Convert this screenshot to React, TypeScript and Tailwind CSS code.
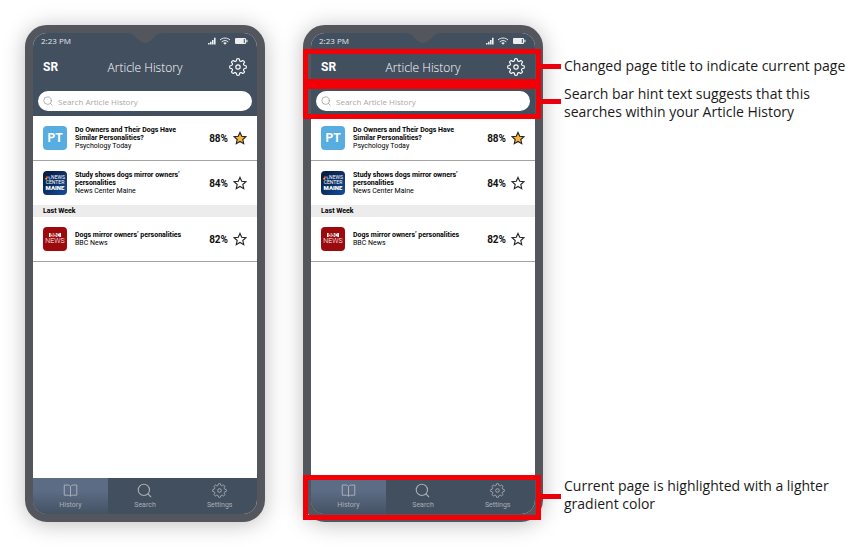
import React from "react";

const UI = "font-['Open_Sans','Noto_Sans',sans-serif]";
const ROBOTO = "font-[Roboto,'Liberation_Sans',sans-serif]";

const GEAR_PATH = (() => {
  const at = (deg: number, r: number) => {
    const a = ((deg - 90) * Math.PI) / 180;
    return `${(12 + r * Math.cos(a)).toFixed(2)} ${(12 + r * Math.sin(a)).toFixed(2)}`;
  };
  let d = `M${at(-9, 10.8)}`;
  for (let i = 0; i < 8; i++) {
    const c = i * 45;
    d += `Q${at(c, 11.5)} ${at(c + 9, 10.8)}L${at(c + 13, 9)}Q${at(c + 22.5, 7.4)} ${at(c + 32, 9)}L${at(c + 36, 10.8)}`;
  }
  return d + "Z";
})();

function GearIcon({ className }: { className: string }) {
  return (
    <svg viewBox="0 0 24 24" className={className} fill="none" stroke="currentColor" strokeWidth="1.5" strokeLinejoin="round" aria-hidden="true">
      <path d={GEAR_PATH} />
      <circle cx="12" cy="12" r="2.9" />
    </svg>
  );
}

function BookIcon({ className }: { className: string }) {
  return (
    <svg viewBox="0 0 24 24" className={className} fill="none" stroke="currentColor" strokeWidth="1.6" strokeLinejoin="round" aria-hidden="true">
      <path d="M12 5.5C10.8 4 9.5 3.2 7.5 3.2H2v16.3h6.5c1.8 0 2.8.7 3.5 1.6.7-.9 1.7-1.6 3.5-1.6H22V3.2h-5.5c-2 0-3.3.8-4.5 2.3ZM12 5.5v15.5" />
    </svg>
  );
}

function SearchIcon({ className }: { className: string }) {
  return (
    <svg viewBox="0 0 24 24" className={className} fill="none" stroke="currentColor" strokeWidth="1.8" strokeLinecap="round" aria-hidden="true">
      <circle cx="11" cy="11" r="9" />
      <path d="M17.5 17.5 22 22" />
    </svg>
  );
}

function StarIcon({ filled }: { filled: boolean }) {
  return (
    <svg viewBox="0 0 24 24" className="size-[14px]" fill={filled ? "#fdb338" : "#ffffff"} stroke="#222222" strokeWidth="1.9" strokeLinejoin="miter" aria-hidden="true">
      <path d="M12 2.4 15 9l7.2.8-5.4 4.8 1.6 7.1L12 18l-6.4 3.7 1.6-7.1L1.8 9.800 9 9Z" />
    </svg>
  );
}

function StatusIcons() {
  return (
    <svg viewBox="0 0 40 8" className="h-2 w-10" fill="#eceef0" aria-hidden="true">
      <path d="M0 6h1.6v1.500H0zM2 4.800h1.600v2.700H2zM4 3h1.600v4.500H4zM6 .8h1.600v6.700H6z" />
      <g fill="none" stroke="#eceef0" strokeWidth="1">
        <path d="M12 3c2.700-2.600 7.300-2.600 10 0M13.700 4.800c1.900-1.600 4.700-1.600 6.600 0" />
      </g>
      <path d="M15.200 6c1.100-.9 2.500-.9 3.600 0L17 7.800Z" />
      <rect x="27" y="1" width="11" height="6" rx="1" />
      <path d="M38.300 2.800h1.200v2.400h-1.200z" />
      <path d="M35.800 2h1v4h-1z" fill="#424f5f" />
    </svg>
  );
}

function PsychologyTodayLogo() {
  return <span className="flex size-6 items-center justify-center rounded bg-[#57ade0] text-[12px] font-bold text-white">PT</span>;
}

function NewsCenterMaineLogo() {
  return (
    <span className="flex size-6 flex-col items-center justify-center overflow-hidden rounded bg-linear-to-br from-[#071a3a] via-[#0d2f66] to-[#1450a0] text-white">
      <span className="flex items-center text-[5px] leading-[5px]">
        <svg viewBox="0 0 12 8" className="h-1 w-[6px]" aria-hidden="true">
          <circle cx="2.5" cy="5.5" r="2.2" fill="#f6b221" />
          <circle cx="4" cy="2.5" r="2.2" fill="#ee5a2a" />
          <circle cx="8" cy="2.5" r="2.2" fill="#8a5fc0" />
          <circle cx="9.5" cy="5.5" r="2.2" fill="#35a7e0" />
        </svg>
        NEWS
      </span>
      <span className="text-[5px] leading-[5px]">CENTER</span>
      <span className="text-[6px] leading-[6px] font-black">MAINE</span>
    </span>
  );
}

function BbcNewsLogo() {
  return (
    <span className="flex size-6 flex-col items-center justify-center rounded bg-[#9d0a0e] text-white">
      <span className="flex bg-white px-px text-[5px] leading-[4px] font-bold text-[#9d0a0e]">BBC</span>
      <span className="text-[7px] leading-[8px] font-light">NEWS</span>
    </span>
  );
}

type Article = { title: string; source: string; score: string; starred: boolean; logo: React.ReactNode };

function ArticleRow({ article, divided }: { article: Article; divided: boolean }) {
  return (
    <li className={`flex items-center px-[10px] ${divided ? "h-[45px] border-b border-[#a3a3a3]" : "h-11"}`}>
      {article.logo}
      <div className="ml-2 min-w-0 flex-1 text-[7px] leading-[8px] text-black">
        <h3 className="max-w-[112px] font-bold">{article.title}</h3>
        <p>{article.source}</p>
      </div>
      <span className="mr-[5px] text-[10px] font-bold text-[#111111]">{article.score}</span>
      <button type="button" aria-label="Save article" className="flex">
        <StarIcon filled={article.starred} />
      </button>
    </li>
  );
}

const thisWeek: Article[] = [
  { title: "Do Owners and Their Dogs Have Similar Personalities?", source: "Psychology Today", score: "88%", starred: true, logo: <PsychologyTodayLogo /> },
  { title: "Study shows dogs mirror owners’ personalities", source: "News Center Maine", score: "84%", starred: false, logo: <NewsCenterMaineLogo /> },
];

const lastWeek: Article[] = [
  { title: "Dogs mirror owners’ personalities", source: "BBC News", score: "82%", starred: false, logo: <BbcNewsLogo /> },
];

const tabs = [
  { label: "History", Icon: BookIcon },
  { label: "Search", Icon: SearchIcon },
  { label: "Settings", Icon: GearIcon },
];

function Highlight({ className, line }: { className: string; line: string }) {
  return (
    <div className={`pointer-events-none absolute -left-2 -right-[6px] border-[5px] border-[#f20008] ${className}`}>
      <span className={`absolute left-full ml-[5px] h-[5px] w-5 bg-[#e8000a] ${line}`} />
    </div>
  );
}

function Phone({ annotated = false }: { annotated?: boolean }) {
  return (
    <section className="relative flex h-[497px] w-60 shrink-0 flex-col rounded-[22px] border-8 border-[#53575d] bg-white shadow-[0_2px_22px_rgba(0,0,0,0.26)]">
      <header className="relative rounded-t-[14px] bg-[#424f5f] text-white">
        <svg viewBox="0 0 34 11" className="absolute top-0 left-1/2 h-[11px] w-[34px] -translate-x-1/2" fill="#53575d" aria-hidden="true">
          <path d="M0 0h34c-3 0-4.5 1-6.5 3l-5 4.500c-3.500 3.300-7.500 3.300-11 0l-5-4.500C4.500 1 3 0 0 0Z" />
        </svg>
        <div className={`flex h-4 items-center justify-between pr-[9px] pl-2 text-[8px] text-[#e4e7ea] ${UI}`}>
          <span>2:23 PM</span>
          <StatusIcons />
        </div>
        <div className="grid h-[35px] grid-cols-[1fr_auto_1fr] items-center px-[10px]">
          <span className={`text-[12px] font-bold ${ROBOTO}`}>SR</span>
          <h1 className={`pt-[2px] text-[12px] font-light ${UI}`}>Article History</h1>
          <button type="button" aria-label="Settings" className="flex justify-self-end">
            <GearIcon className="size-[18px]" />
          </button>
        </div>
        <div className="px-[5px] pt-[7px] pb-[5px]">
          <label className="flex h-5 items-center gap-[5px] rounded-full bg-white px-[5px] text-[#9a9a9a]">
            <SearchIcon className="size-[10px] shrink-0" />
            <input
              type="search"
              aria-label="Search Article History"
              placeholder="Search Article History"
              className={`h-full min-w-0 flex-1 bg-transparent text-[8px] text-black outline-none placeholder:text-[#a8a8a8] ${UI}`}
            />
          </label>
        </div>
      </header>

      <main className={`flex-1 ${ROBOTO}`}>
        <ul>
          {thisWeek.map((a, i) => (
            <ArticleRow key={a.title} article={a} divided={i === 0} />
          ))}
        </ul>
        <h2 className="bg-[#ececec] px-[10px] text-[7px] leading-[12px] font-bold text-black">Last Week</h2>
        <ul>
          {lastWeek.map((a) => (
            <ArticleRow key={a.title} article={a} divided />
          ))}
        </ul>
      </main>

      <nav className={`grid h-9 grid-cols-3 overflow-hidden rounded-b-[14px] bg-[#424f5f] text-[7px] leading-[8px] text-[#a9aeb5] ${ROBOTO}`}>
        {tabs.map(({ label, Icon }, i) => (
          <button
            key={label}
            type="button"
            className={`flex flex-col items-center gap-[3px] pt-[5px] ${i === 0 ? "bg-linear-to-b from-[#5c6c85] from-35% to-[#445263]" : ""}`}
          >
            <Icon className="size-[15px]" />
            <span>{label}</span>
          </button>
        ))}
      </nav>

      {annotated && (
        <>
          <Highlight className="top-4 h-[35px]" line="top-[10px]" />
          <Highlight className="top-[51px] h-[35px]" line="top-[10px]" />
          <Highlight className="-bottom-[6px] h-[45px]" line="top-[14px]" />
        </>
      )}
    </section>
  );
}

export default function App() {
  return (
    <div className="flex min-h-screen items-start overflow-hidden bg-white py-[25px] pl-[25px]">
      <Phone />
      <div className="ml-[38px] flex flex-1 items-stretch">
        <Phone annotated />
        <aside className={`ml-[21px] flex flex-1 flex-col pt-8 pb-[9px] text-[14px] leading-[18px] text-[#1a1a1a] ${UI}`}>
          <p>Changed page title to indicate current page</p>
          <p className="mt-[10px] max-w-[260px]">Search bar hint text suggests that this searches within your Article History</p>
          <p className="mt-auto max-w-[270px]">Current page is highlighted with a lighter gradient color</p>
        </aside>
      </div>
    </div>
  );
}
